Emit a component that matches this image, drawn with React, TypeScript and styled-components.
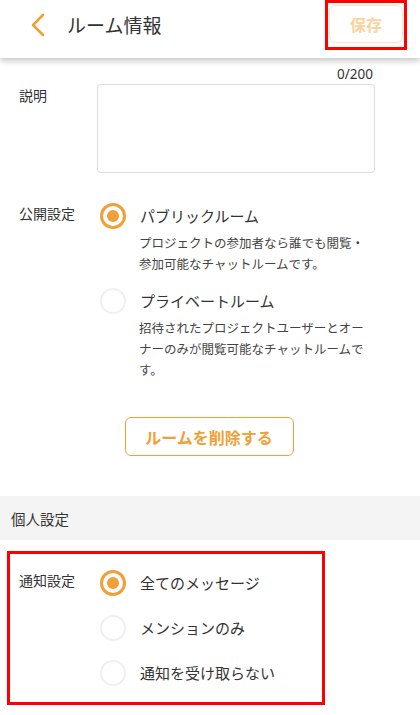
import React, { useState } from 'react';
import styled, { createGlobalStyle } from 'styled-components';

const ORANGE = '#f29f3a';

const GlobalStyle = createGlobalStyle`
  html, body {
    margin: 0;
    padding: 0;
    background: #fff;
  }
  body {
    font-family: 'Noto Sans CJK JP', 'Noto Sans', sans-serif;
    color: #333;
  }
  * { box-sizing: border-box; }
`;

const Page = styled.div`
  width: 420px;
  min-height: 715px;
  background: #fff;
  overflow: hidden;
`;

const Header = styled.header`
  height: 58px;
  display: flex;
  align-items: flex-start;
  padding-left: 28px;
  background: #fff;
  box-shadow: 0 3px 6px rgba(0, 0, 0, 0.22);
  position: relative;
  z-index: 1;
`;

const BackButton = styled.button`
  border: none;
  background: none;
  padding: 0;
  margin-top: 13px;
  width: 20px;
  height: 24px;
  display: flex;
  align-items: center;
  justify-content: center;
  cursor: pointer;
`;

const Title = styled.h1`
  margin: 0 0 0 19px;
  font-size: 19px;
  font-weight: 400;
  line-height: 50px;
  color: #333;
`;

const Highlight = styled.div`
  border: 3px solid #f00;
`;

const SaveWrap = styled(Highlight)`
  margin-left: auto;
  margin-right: 13px;
  height: 50px;
  padding: 2px 1px 0 1px;
`;

const SaveButton = styled.button`
  width: 74px;
  height: 38px;
  border: 1px solid #fde3bf;
  border-radius: 6px;
  background: #fff;
  color: #fbd39c;
  font-family: inherit;
  font-size: 16px;
  font-weight: 700;
  cursor: default;
`;

const Counter = styled.div`
  margin-top: 8px;
  padding-right: 47px;
  text-align: right;
  font-family: 'Noto Sans', sans-serif;
  font-size: 13.5px;
  line-height: 16px;
  color: #333;
`;

const Row = styled.div<{ $top?: number }>`
  display: flex;
  align-items: flex-start;
  padding-left: 19px;
  margin-top: ${(p) => p.$top ?? 0}px;
`;

const Label = styled.div<{ $pad?: number }>`
  width: 78px;
  flex-shrink: 0;
  font-size: 14px;
  line-height: 20px;
  padding-top: ${(p) => p.$pad ?? 0}px;
  color: #333;
`;

const TextArea = styled.textarea`
  width: 278px;
  height: 89px;
  border: 1px solid #dcdcdc;
  border-radius: 4px;
  resize: none;
  outline: none;
  font-family: inherit;
  font-size: 14px;
  padding: 8px;
`;

const Options = styled.div`
  display: flex;
  flex-direction: column;
  padding-left: 3px;
`;

const Option = styled.label<{ $gap?: number }>`
  display: flex;
  flex-direction: column;
  margin-top: ${(p) => p.$gap ?? 0}px;
  cursor: pointer;
`;

const OptionHead = styled.div`
  display: flex;
  align-items: center;
  height: 26px;
`;

const Radio = styled.span<{ $checked: boolean }>`
  width: 26px;
  height: 26px;
  border-radius: 50%;
  flex-shrink: 0;
  border: ${(p) => (p.$checked ? `3px solid ${ORANGE}` : '2px solid #f0f0f0')};
  display: flex;
  align-items: center;
  justify-content: center;
  &::after {
    content: '';
    width: 12px;
    height: 12px;
    border-radius: 50%;
    background: ${ORANGE};
    display: ${(p) => (p.$checked ? 'block' : 'none')};
  }
`;

const OptionText = styled.span`
  margin-left: 14px;
  font-size: 15px;
  color: #333;
  line-height: 20px;
`;

const OptionDesc = styled.p`
  margin: 3px 0 0 39px;
  width: 232px;
  font-size: 12.5px;
  line-height: 21px;
  color: #444;
`;

const DeleteButton = styled.button`
  display: block;
  margin: 37px auto 0;
  width: 169px;
  height: 39px;
  border: 1px solid ${ORANGE};
  border-radius: 6px;
  background: #fff;
  color: ${ORANGE};
  font-family: inherit;
  font-size: 16px;
  font-weight: 700;
  transform: translateX(-1px);
  cursor: pointer;
`;

const SectionBand = styled.div`
  margin-top: 40px;
  height: 44px;
  background: #f4f4f4;
  padding-left: 11px;
  display: flex;
  align-items: center;
  font-size: 14.5px;
  color: #333;
`;

const NoticeBox = styled(Highlight)`
  margin: 11px 0 0 7px;
  width: 318px;
  padding: 16px 0 16px 9px;
  display: flex;
  align-items: flex-start;
`;

type Opt = { key: string; label: string; desc?: string };

const visibility: Opt[] = [
  {
    key: 'public',
    label: 'パブリックルーム',
    desc: 'プロジェクトの参加者なら誰でも閲覧・参加可能なチャットルームです。',
  },
  {
    key: 'private',
    label: 'プライベートルーム',
    desc: '招待されたプロジェクトユーザーとオーナーのみが閲覧可能なチャットルームです。',
  },
];

const notices: Opt[] = [
  { key: 'all', label: '全てのメッセージ' },
  { key: 'mention', label: 'メンションのみ' },
  { key: 'none', label: '通知を受け取らない' },
];

const RadioGroup = ({
  items,
  value,
  onChange,
  gaps,
}: {
  items: Opt[];
  value: string;
  onChange: (k: string) => void;
  gaps: number[];
}) => (
  <Options>
    {items.map((o, i) => (
      <Option key={o.key} $gap={gaps[i]} onClick={() => onChange(o.key)}>
        <OptionHead>
          <Radio $checked={value === o.key} />
          <OptionText>{o.label}</OptionText>
        </OptionHead>
        {o.desc && <OptionDesc>{o.desc}</OptionDesc>}
      </Option>
    ))}
  </Options>
);

export default function App() {
  const [vis, setVis] = useState('public');
  const [notice, setNotice] = useState('all');

  return (
    <Page>
      <GlobalStyle />
      <Header>
        <BackButton aria-label="戻る">
          <svg width="16" height="24" viewBox="0 0 16 24" fill="none">
            <path d="M13 2 L3 12 L13 22" stroke={ORANGE} strokeWidth="2.6" strokeLinecap="round" strokeLinejoin="round" />
          </svg>
        </BackButton>
        <Title>ルーム情報</Title>
        <SaveWrap>
          <SaveButton>保存</SaveButton>
        </SaveWrap>
      </Header>

      <Counter>0/200</Counter>
      <Row $top={2}>
        <Label $pad={1}>説明</Label>
        <TextArea />
      </Row>

      <Row $top={30}>
        <Label>公開設定</Label>
        <RadioGroup items={visibility} value={vis} onChange={setVis} gaps={[0, 14]} />
      </Row>

      <DeleteButton>ルームを削除する</DeleteButton>

      <SectionBand>個人設定</SectionBand>

      <NoticeBox>
        <Label $pad={0}>通知設定</Label>
        <RadioGroup items={notices} value={notice} onChange={setNotice} gaps={[0, 19, 19]} />
      </NoticeBox>
    </Page>
  );
}
